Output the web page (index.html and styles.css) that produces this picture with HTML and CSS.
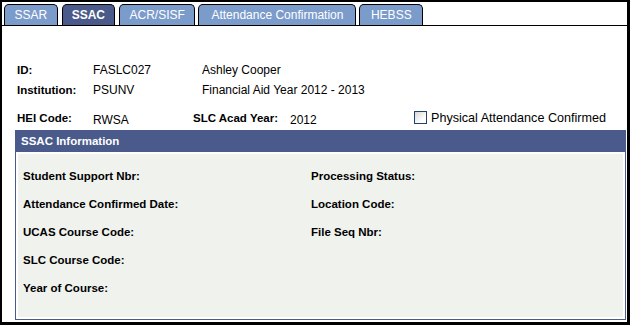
FILE: index.html
```html
<!DOCTYPE html>
<html lang="en">
<head>
    <meta charset="UTF-8">
    <title>SSAC</title>
    <link rel="stylesheet" href="styles.css">
</head>
<body>
    <div class="frame">
        <!-- tab strip -->
        <div class="tabs">
            <div class="tab">SSAR</div>
            <div class="tab active">SSAC</div>
            <div class="tab">ACR/SISF</div>
            <div class="tab tab-long">Attendance Confirmation</div>
            <div class="tab tab-last">HEBSS</div>
        </div>

        <!-- key fields -->
        <div class="keys">
            <div class="key-row">
                <span class="lbl lbl-key">ID:</span>
                <span class="val val-wide">FASLC027</span>
                <span class="val">Ashley Cooper</span>
            </div>
            <div class="key-row">
                <span class="lbl lbl-key">Institution:</span>
                <span class="val val-wide">PSUNV</span>
                <span class="val">Financial Aid Year 2012 - 2013</span>
            </div>
            <div class="key-row key-row-last">
                <span class="lbl lbl-key">HEI Code:</span>
                <span class="val val-mid low">RWSA</span>
                <span class="lbl lbl-acad">SLC Acad Year:</span>
                <span class="val val-year low">2012</span>
                <span class="check"></span>
                <span class="check-label">Physical Attendance Confirmed</span>
            </div>
        </div>

        <!-- group box -->
        <div class="group">
            <div class="group-title">SSAC Information</div>
            <div class="group-body">
                <div class="lbl">Student Support Nbr:</div>
                <div class="lbl">Processing Status:</div>
                <div class="lbl">Attendance Confirmed Date:</div>
                <div class="lbl">Location Code:</div>
                <div class="lbl">UCAS Course Code:</div>
                <div class="lbl">File Seq Nbr:</div>
                <div class="lbl">SLC Course Code:</div>
                <div></div>
                <div class="lbl">Year of Course:</div>
                <div></div>
            </div>
        </div>
    </div>
</body>
</html>
```

FILE: styles.css
```css
/* reset */
html, body {
    margin: 0;
    padding: 0;
}

body {
    width: 630px;
    height: 325px;
    font-family: "Liberation Sans", Arial, sans-serif;
    font-size: 12px;
    color: #000;
    background: #fff;
}

/* window frame */
.frame {
    box-sizing: border-box;
    height: 325px;
    border-style: solid;
    border-color: #000;
    border-width: 2px 3px 3px 2px;
    background: #fff;
}

/* tabs */
.tabs {
    display: flex;
    align-items: flex-end;
    gap: 4px;
    height: 23px;
    padding-left: 2px;
    border-bottom: 1px solid #000;
}

.tab {
    height: 20px;
    line-height: 20px;
    padding: 0 9.5px;
    border: 1px solid #000;
    border-bottom: none;
    border-radius: 5px 5px 0 0;
    background-color: #7b9bcb;
    color: #fff;
    font-size: 12px;
}

.tab.active {
    padding: 0 9px;
    background-color: #4a5a8a;
    font-weight: bold;
}

.tab-long {
    margin-left: -1px;
    padding: 0 12px;
}

.tab-last {
    margin-left: -1px;
    padding: 0 10.5px;
}

/* key fields */
.keys {
    padding: 34px 0 0 15px;
}

.key-row {
    display: flex;
    align-items: center;
    height: 20px;
}

.key-row-last {
    margin-top: 8px;
}

.lbl {
    font-weight: bold;
    font-size: 11.5px;
}

.lbl-key {
    width: 76px;
}

.lbl-acad {
    width: 97px;
}

.val {
    font-size: 12px;
}

.val-wide {
    width: 109px;
}

.val-mid {
    width: 100px;
}

.val-year {
    width: 124px;
}

.low {
    padding-top: 3px;
}

.check {
    box-sizing: border-box;
    width: 13px;
    height: 13px;
    margin: -1px 4px 0 0;
    border: 1px solid #1f4270;
    background: linear-gradient(135deg, #d6d6d6, #fff 70%);
}

.check-label {
    font-size: 12.6px;
}

/* group box */
.group {
    margin: 2px 1px 0 13px;
    border: 1px solid #4a5a8a;
}

.group-title {
    height: 21px;
    line-height: 21px;
    padding-left: 5px;
    background-color: #4a5a8a;
    color: #fff;
    font-weight: bold;
    font-size: 11.5px;
}

.group-body {
    display: grid;
    grid-template-columns: 288px 1fr;
    grid-auto-rows: 28px;
    align-items: center;
    padding: 8px 5px 15px;
    border: 2px solid #fff;
    background-color: #f0f2ee;
}
```
